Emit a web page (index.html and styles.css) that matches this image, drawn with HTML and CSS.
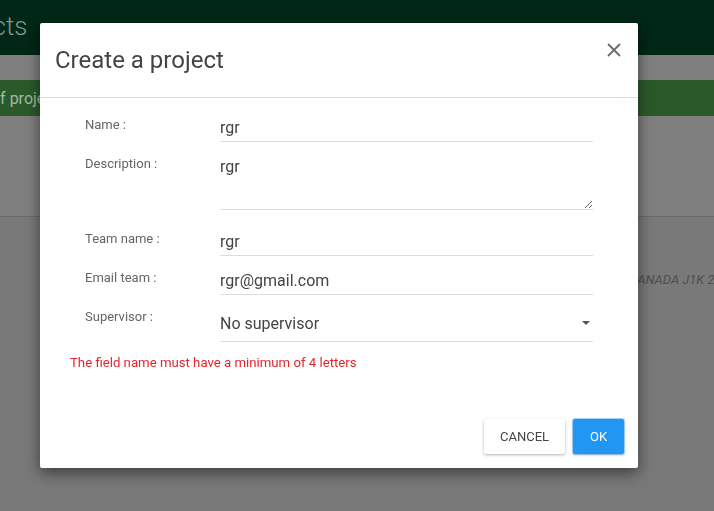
FILE: index.html
```html
<!DOCTYPE html>
<html lang="en">
<head>
<meta charset="utf-8">
<title>Create a project</title>
<link rel="stylesheet" href="styles.css">
</head>
<body>
<div class="page">
  <header class="appbar"><span class="appbar-title">Projects</span></header>
  <div class="spacer"></div>
  <div class="titlebar"><span class="titlebar-text">List of projects</span></div>
  <section class="panel"></section>
  <main class="content"><p class="address">CANADA J1K 2R1</p></main>
</div>

<div class="overlay">
  <div class="dialog">
    <div class="dialog-header">
      <h1 class="dialog-title">Create a project</h1>
      <button class="close-btn" aria-label="Close">
        <svg width="14" height="14" viewBox="0 0 14 14"><path d="M1 1L13 13M13 1L1 13" stroke="#6b6b6b" stroke-width="1.8" fill="none"/></svg>
      </button>
    </div>
    <div class="dialog-body">
      <div class="form">
        <label class="label">Name :</label>
        <input class="field" type="text" value="rgr">
        <label class="label">Description :</label>
        <textarea class="field area">rgr</textarea>
        <label class="label">Team name :</label>
        <input class="field" type="text" value="rgr">
        <label class="label">Email team :</label>
        <input class="field" type="text" value="rgr@gmail.com">
        <label class="label">Supervisor :</label>
        <div class="field select">
          <span>No supervisor</span>
          <svg width="8" height="4" viewBox="0 0 8 4"><path d="M0 0H8L4 4Z" fill="#555"/></svg>
        </div>
      </div>
      <p class="error">The field name must have a minimum of 4 letters</p>
    </div>
    <div class="dialog-footer">
      <button class="btn btn-cancel">CANCEL</button>
      <button class="btn btn-ok">OK</button>
    </div>
  </div>
</div>
</body>
</html>
```
FILE: styles.css
```css
* { box-sizing: border-box; }

body {
  margin: 0;
  width: 714px;
  height: 511px;
  overflow: hidden;
  font-family: Roboto, "Noto Sans", sans-serif;
  background: #797979;
}

.page { display: flex; flex-direction: column; }

.appbar {
  height: 55px;
  background: #012716;
  display: flex;
  align-items: center;
  padding-bottom: 4px;
  overflow: hidden;
}
.appbar-title {
  font-size: 26px;
  font-weight: 300;
  color: #7f938a;
  margin-left: -66px;
  white-space: nowrap;
}

.spacer { height: 25px; background: #7f7f7f; }

.titlebar {
  height: 36px;
  background: #2a5a2a;
  display: flex;
  align-items: center;
  overflow: hidden;
}
.titlebar-text {
  font-size: 16px;
  color: #a3b9a3;
  margin-left: -39px;
  white-space: nowrap;
}

.panel {
  height: 101px;
  background: #7f7f7f;
  border-bottom: 1px solid #6c6c6c;
}

.content {
  background: #797979;
  padding-top: 55px;
}
.address {
  margin: 0;
  padding-left: 629px;
  font-size: 13px;
  line-height: 16px;
  font-style: italic;
  color: #4f4f4f;
  white-space: nowrap;
}

.overlay {
  position: fixed;
  inset: 0;
  padding: 23px 0 0 40px;
}

.dialog {
  width: 598px;
  height: 445px;
  background: #fff;
  border-radius: 2px;
  box-shadow: 0 5px 15px rgba(0, 0, 0, 0.5);
  display: flex;
  flex-direction: column;
}

.dialog-header {
  height: 75px;
  border-bottom: 1px solid #dedede;
  display: flex;
  align-items: center;
  justify-content: space-between;
  padding: 0 17px 0 15px;
}
.dialog-title {
  margin: 0;
  font-size: 24px;
  font-weight: 400;
  color: #444;
}
.close-btn {
  align-self: flex-start;
  margin-top: 20px;
  padding: 0;
  border: none;
  background: none;
  width: 14px;
  height: 14px;
  display: flex;
}

.dialog-body { padding: 15px 30px 0; }

.form {
  display: grid;
  grid-template-columns: 135px 1fr;
  row-gap: 10px;
  align-items: start;
  padding: 0 15px;
}

.label {
  font-size: 13px;
  line-height: 16px;
  color: #666;
  margin-top: 4px;
}

.field {
  height: 29px;
  border: none;
  border-bottom: 1px solid #ddd;
  padding: 0;
  font-family: Roboto, "Noto Sans", sans-serif;
  font-size: 16px;
  color: #444;
  background: #fff;
  outline: none;
  width: 100%;
}
.area {
  height: 58px;
  padding-top: 5px;
  resize: vertical;
  margin-bottom: 7px;
  line-height: normal;
}
.select {
  height: 37px;
  display: flex;
  align-items: center;
  justify-content: space-between;
  padding-right: 3px;
}

.error {
  margin: 13px 0 0;
  font-size: 13.2px;
  line-height: 16px;
  color: #e3262c;
}

.dialog-footer {
  margin-top: auto;
  display: flex;
  justify-content: flex-end;
  gap: 8px;
  padding: 0 14px 14px 0;
}
.btn {
  height: 35px;
  border: none;
  border-radius: 2px;
  font-family: Roboto, "Noto Sans", sans-serif;
  font-size: 13px;
}
.btn-cancel {
  width: 81px;
  background: #fff;
  color: #444;
  box-shadow: 0 1px 3px rgba(0, 0, 0, 0.3);
}
.btn-ok {
  width: 51px;
  background: #2196f3;
  color: #fff;
  box-shadow: 0 0 0 1px rgba(33, 150, 243, 0.35), 0 1px 3px rgba(0, 0, 0, 0.3);
}
```
